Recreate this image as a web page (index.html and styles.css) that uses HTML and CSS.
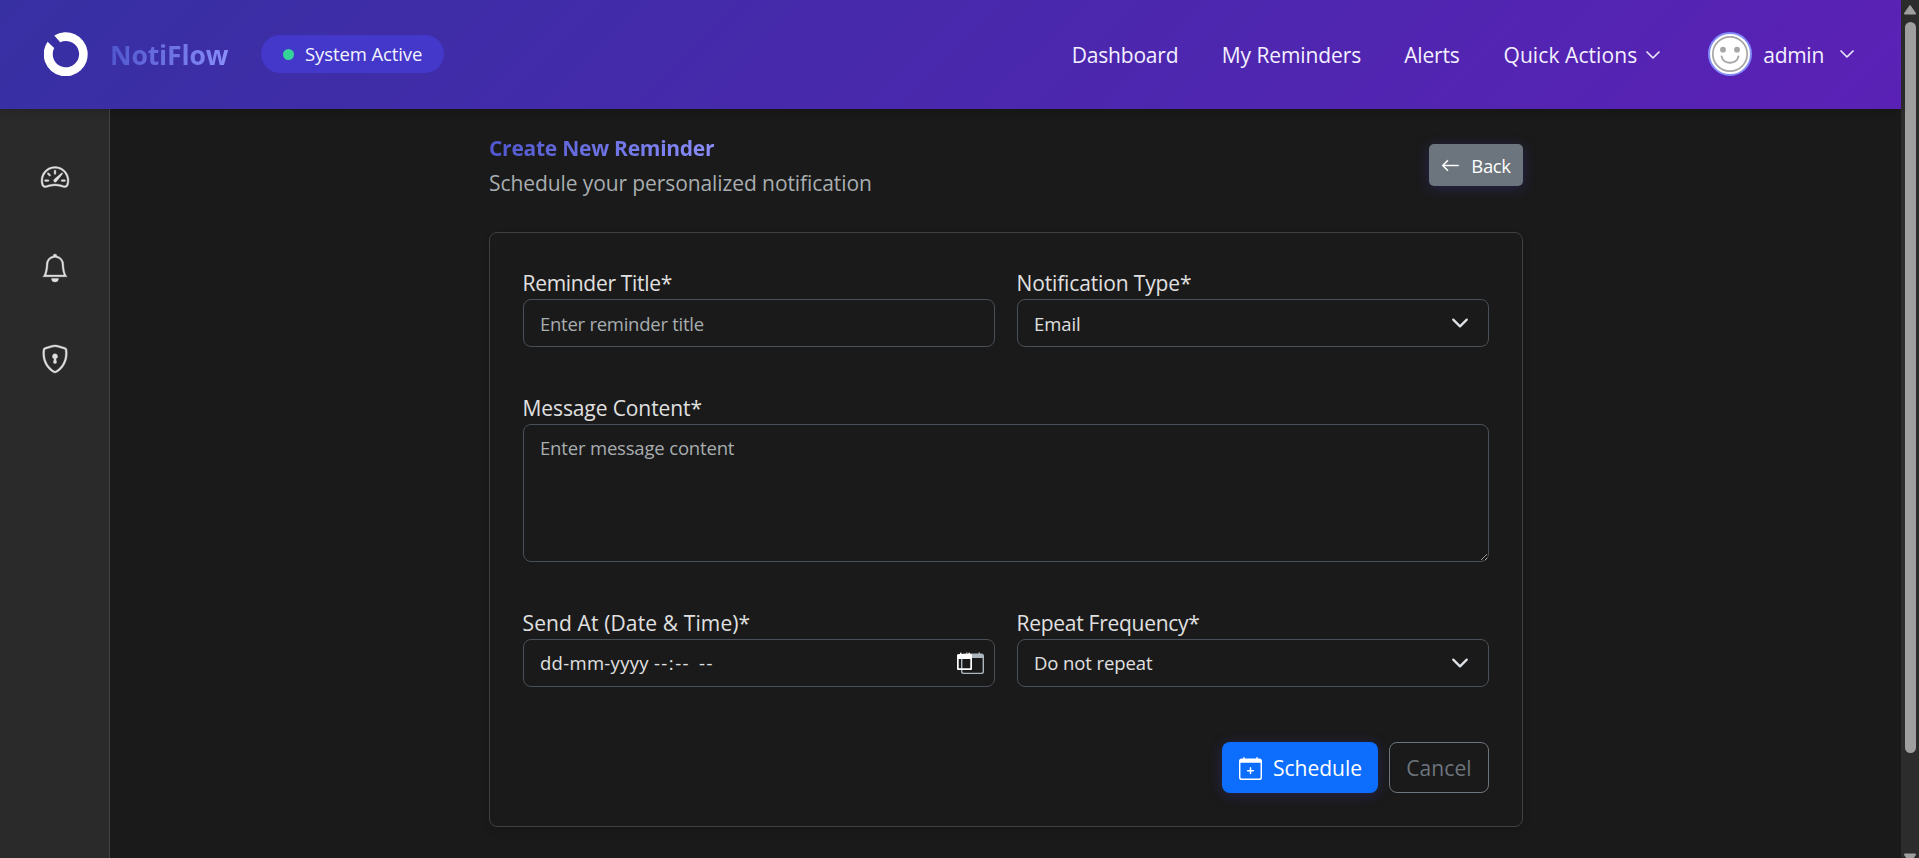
FILE: index.html
```
<!DOCTYPE html>
<html lang="en">
<head>
<meta charset="utf-8">
<title>NotiFlow - Create New Reminder</title>
<link rel="stylesheet" href="styles.css">
</head>
<body>
<div class="app">
  <div class="page">
    <header class="topbar">
      <div class="brand">
        <svg class="logo" viewBox="0 0 44 44"><path fill="#fff" d="M10.3 3.5A22 22 0 1 1 3.6 9.8L10.2 16A13.2 13.2 0 1 0 16.2 10.2Z"/></svg>
        <span class="brand-name gradient-text">NotiFlow</span>
        <span class="status"><i class="status-dot"></i><span class="status-text">System Active</span></span>
      </div>
      <nav class="nav">
        <a class="ls-dash">Dashboard</a>
        <a class="ls-rem">My Reminders</a>
        <a class="ls-alerts">Alerts</a>
        <a class="with-caret">Quick Actions
          <svg class="caret" viewBox="0 0 16 16" fill="currentColor"><path d="M1.646 4.646a.5.5 0 0 1 .708 0L8 10.293l5.646-5.647a.5.5 0 0 1 .708.708l-6 6a.5.5 0 0 1-.708 0l-6-6a.5.5 0 0 1 0-.708"/></svg>
        </a>
        <a class="user">
          <svg class="avatar" viewBox="0 0 44 44">
            <circle cx="22" cy="22" r="21" fill="#fff" stroke="#818cf8" stroke-width="2"/>
            <circle cx="22" cy="22" r="17.2" fill="none" stroke="#a6a6a6" stroke-width="1.7"/>
            <circle cx="15" cy="17.7" r="2.9" fill="#a6a6a6"/><circle cx="29" cy="17.7" r="2.9" fill="#a6a6a6"/>
            <path d="M13.5 24.3c1.8 8.6 15.2 8.6 17 0" fill="none" stroke="#a6a6a6" stroke-width="1.8" stroke-linecap="round"/>
          </svg>
          <span class="user-name">admin</span>
          <svg class="caret" viewBox="0 0 16 16" fill="currentColor"><path d="M1.646 4.646a.5.5 0 0 1 .708 0L8 10.293l5.646-5.647a.5.5 0 0 1 .708.708l-6 6a.5.5 0 0 1-.708 0l-6-6a.5.5 0 0 1 0-.708"/></svg>
        </a>
      </nav>
    </header>
    <div class="body">
      <aside class="sidebar">
        <a><svg viewBox="0 0 16 16" fill="currentColor"><path d="M8 4a.5.5 0 0 1 .5.5V6a.5.5 0 0 1-1 0V4.500A.5.5 0 0 1 8 4M3.732 5.732a.5.5 0 0 1 .707 0l.915.914a.5.5 0 1 1-.708.708l-.914-.915a.5.5 0 0 1 0-.707M2 10a.5.5 0 0 1 .5-.5h1.586a.5.5 0 0 1 0 1H2.500A.5.5 0 0 1 2 10m9.500 0a.5.5 0 0 1 .5-.5h1.500a.5.5 0 0 1 0 1H12a.5.5 0 0 1-.5-.5m.754-4.246a.39.39 0 0 0-.527-.02L7.547 9.310a.91.91 0 1 0 1.302 1.258l3.434-4.297a.39.39 0 0 0-.029-.518z"/><path fill-rule="evenodd" d="M0 10a8 8 0 1 1 15.547 2.661c-.442 1.253-1.845 1.602-2.932 1.250C11.309 13.488 9.475 13 8 13c-1.474 0-3.310.488-4.615.911-1.087.352-2.490.003-2.932-1.250A8 8 0 0 1 0 10m8-7a7 7 0 0 0-6.603 9.329c.203.575.923.876 1.680.630C4.397 12.533 6.358 12 8 12s3.604.532 4.923.960c.757.245 1.477-.056 1.680-.631A7 7 0 0 0 8 3"/></svg></a>
        <a><svg viewBox="0 0 16 16" fill="currentColor"><path d="M8 16a2 2 0 0 0 2-2H6a2 2 0 0 0 2 2M8 1.918l-.797.161A4 4 0 0 0 4 6c0 .628-.134 2.197-.459 3.742-.16.767-.376 1.566-.663 2.258h10.244c-.287-.692-.502-1.490-.663-2.258C12.134 8.197 12 6.628 12 6a4 4 0 0 0-3.203-3.920zM14.220 12c.223.447.481.801.780 1H1c.299-.199.557-.553.780-1C2.680 10.200 3 6.880 3 6c0-2.420 1.720-4.440 4.005-4.901a1 1 0 1 1 1.990 0A5 5 0 0 1 13 6c0 .880.320 4.200 1.220 6"/></svg></a>
        <a><svg viewBox="0 0 16 16" fill="currentColor"><path d="M5.338 1.590a61 61 0 0 0-2.837.856.48.48 0 0 0-.328.390c-.554 4.157.726 7.190 2.253 9.188a10.700 10.700 0 0 0 2.287 2.233c.346.244.652.420.893.533q.180.085.293.118a1 1 0 0 0 .101.025 1 1 0 0 0 .100-.025q.114-.034.294-.118c.240-.113.547-.290.893-.533a10.700 10.700 0 0 0 2.287-2.233c1.527-1.997 2.807-5.031 2.253-9.188a.48.48 0 0 0-.328-.390c-.651-.213-1.750-.560-2.837-.855C9.552 1.290 8.531 1.067 8 1.067c-.530 0-1.552.223-2.662.524zM5.072.560C6.157.265 7.310 0 8 0s1.843.265 2.928.560c1.110.300 2.229.655 2.887.870a1.540 1.540 0 0 1 1.044 1.262c.596 4.477-.787 7.795-2.465 9.990a11.800 11.800 0 0 1-2.517 2.453 7 7 0 0 1-1.048.625c-.280.132-.581.240-.829.240s-.548-.108-.829-.240a7 7 0 0 1-1.048-.625 11.800 11.800 0 0 1-2.517-2.453C1.928 10.487.545 7.169 1.141 2.692A1.540 1.540 0 0 1 2.185 1.430 63 63 0 0 1 5.072.560"/><path d="M9.500 6.500a1.500 1.500 0 0 1-1 1.415l.385 1.990a.5.5 0 0 1-.491.595h-.788a.5.5 0 0 1-.490-.595l.384-1.990a1.500 1.500 0 1 1 2-1.415"/></svg></a>
      </aside>
      <main class="content">
        <div class="page-head">
          <div>
            <h1 class="gradient-text">Create New Reminder</h1>
            <p>Schedule your personalized notification</p>
          </div>
          <button class="btn btn-back"><svg viewBox="0 0 16 16" fill="currentColor"><path fill-rule="evenodd" d="M15 8a.5.5 0 0 0-.5-.5H2.707l3.147-3.146a.5.5 0 1 0-.708-.708l-4 4a.5.5 0 0 0 0 .708l4 4a.5.5 0 0 0 .708-.708L2.707 8.500H14.500A.5.5 0 0 0 15 8"/></svg><span>Back</span></button>
        </div>
        <form class="card">
          <div class="row">
            <div class="field"><label class="ls-title">Reminder Title*</label><input class="control ls-ph-title" type="text" placeholder="Enter reminder title"></div>
            <div class="field"><label class="ls-type">Notification Type*</label>
              <div class="control select email"><span>Email</span><svg viewBox="0 0 16 16" fill="none" stroke="#dee2e6" stroke-width="2" stroke-linecap="round" stroke-linejoin="round"><path d="m2 5 6 6 6-6"/></svg></div></div>
          </div>
          <div class="field"><label>Message Content*</label><textarea class="control area" placeholder="Enter message content"></textarea></div>
          <div class="row">
            <div class="field"><label class="ls-send">Send At (Date &amp; Time)*</label>
              <div class="control date"><span class="date-text"><span class="day">dd-mm-yyyy</span><span class="time">--:--</span><span class="meridiem">--</span></span>
                <svg class="date-icon" viewBox="0 0 28 24">
                  <path d="M6.500 1.500H9V.5h1.500v1h11V.5H23v1h1.500A2.500 2.500 0 0 1 27 4v15.500a2.500 2.500 0 0 1-2.500 2.500h-18A2.500 2.500 0 0 1 4 19.500V4a2.500 2.500 0 0 1 2.500-2.500ZM5.400 6v13.500c0 .7.5 1.200 1.200 1.200h17.800c.7 0 1.200-.5 1.200-1.200V6Z" fill="#adb5bd" fill-rule="evenodd"/>
                  <path d="M1.500 2H3V.8h1.500V2h7V.8H13V2h1.200l.8.800V17.200l-.8.800H.8l-.8-.8V2.800ZM1.700 7v9.300h11.600V7Z" fill="#fff" fill-rule="evenodd"/>
                </svg></div></div>
            <div class="field"><label class="ls-freq">Repeat Frequency*</label>
              <div class="control select"><span>Do not repeat</span><svg viewBox="0 0 16 16" fill="none" stroke="#dee2e6" stroke-width="2" stroke-linecap="round" stroke-linejoin="round"><path d="m2 5 6 6 6-6"/></svg></div></div>
          </div>
          <div class="actions">
            <button type="button" class="btn btn-primary"><svg viewBox="0 0 16 16" fill="currentColor"><path d="M8 7a.5.5 0 0 1 .5.5V9H10a.5.5 0 0 1 0 1H8.500v1.500a.5.5 0 0 1-1 0V10H6a.5.5 0 0 1 0-1h1.500V7.500A.5.5 0 0 1 8 7"/><path d="M3.500 0a.5.5 0 0 1 .5.5V1h8V.5a.5.5 0 0 1 1 0V1h1a2 2 0 0 1 2 2v11a2 2 0 0 1-2 2H2a2 2 0 0 1-2-2V3a2 2 0 0 1 2-2h1V.5a.5.5 0 0 1 .5-.5M1 4v10a1 1 0 0 0 1 1h12a1 1 0 0 0 1-1V4z"/></svg><span>Schedule</span></button>
            <button type="button" class="btn btn-outline">Cancel</button>
          </div>
        </form>
      </main>
    </div>
  </div>
  <div class="scrollbar">
    <svg class="arrow" viewBox="0 0 12 10"><path d="M6 1.200 11 8.500H1Z" fill="#9f9f9f" stroke="#9f9f9f" stroke-width="2" stroke-linejoin="round"/></svg>
    <div class="thumb"></div>
    <svg class="arrow" viewBox="0 0 12 10"><path d="M6 8.800 11 1.500H1Z" fill="#9f9f9f" stroke="#9f9f9f" stroke-width="2" stroke-linejoin="round"/></svg>
  </div>
</div>
</body>
</html>
```
FILE: styles.css
```
* { box-sizing: border-box; }

body {
  margin: 0;
  background: #1a1a1a;
  color: #e0e0e0;
  font-family: "Open Sans", "Noto Sans", sans-serif;
  font-size: 21px;
  line-height: 33px;
}

.app { display: flex; height: 858px; overflow: hidden; }
.page { flex: 1; display: flex; flex-direction: column; min-width: 0; }

.gradient-text {
  background: linear-gradient(100deg, #4f55cc, #8b8ffb);
  -webkit-background-clip: text;
  background-clip: text;
  color: transparent;
}

/* Top bar */
.topbar {
  position: relative;
  flex: none;
  height: 109px;
  display: flex;
  align-items: center;
  justify-content: space-between;
  padding: 0 46px 0 44px;
  background: linear-gradient(135deg, #3730a3 0%, #5b21b6 100%);
  box-shadow: 0 4px 8px rgba(0, 0, 0, .15);
}
.brand { display: flex; align-items: center; padding-bottom: 1px; }
.logo { width: 44px; height: 44px; margin-right: 22px; }
.brand-name { font-size: 26.5px; font-weight: 700; letter-spacing: -.12px; padding-top: 2px; width: 119px; }
.status {
  display: flex; align-items: center;
  width: 183px; height: 38px;
  margin-left: 32px; padding-left: 22px;
  border-radius: 19px;
  background: #4338ca;
  color: #f3f4ff;
  font-size: 18.5px; letter-spacing: -.1px;
}
.status-dot { width: 11px; height: 11px; margin-right: 11px; border-radius: 50%; background: #34d399; }
.status-text { padding-bottom: 1px; }

.nav { display: flex; align-items: center; color: #f3f0ff; padding-bottom: 1px; }
.nav a { display: flex; align-items: center; white-space: nowrap; padding-top: 2px; }
.ls-dash { letter-spacing: -.2px; margin-right: 43.5px; }
.ls-rem { letter-spacing: -.087px; margin-right: 43px; }
.ls-alerts { letter-spacing: -.2px; margin-right: 44px; }
.nav .with-caret { letter-spacing: .08px; gap: 8px; margin-right: 47px; }
.nav .user { padding-top: 0; }
.caret { width: 16px; height: 16px; stroke: currentColor; stroke-width: .7px; }
.avatar { width: 44px; height: 44px; margin-right: 11px; }
.user-name { letter-spacing: -.28px; margin-right: 15px; padding-top: 2px; }

/* Layout */
.body { flex: 1; display: flex; min-height: 0; }
.sidebar {
  flex: none; width: 110px;
  display: flex; flex-direction: column; align-items: center;
  gap: 63px; padding-top: 54px;
  background: #2a2a2a;
  border-right: 1px solid #444;
}
.sidebar a { height: 28px; display: flex; }
.sidebar svg { width: 28px; height: 28px; stroke: currentColor; stroke-width: .2px; overflow: visible; }
.content { flex: 1; padding: 23px 378px 0 379px; }

.page-head { display: flex; justify-content: space-between; height: 100px; }
h1 { margin: 0; font-size: 21px; line-height: 33px; font-weight: 700; letter-spacing: -.26px; width: 227px; white-space: nowrap; }
.page-head p { margin: 2px 0 0; color: #a8adb0; letter-spacing: -.09px; }

.btn {
  display: flex; align-items: center; justify-content: center;
  border: 0; padding: 0; color: #fff;
  font-family: inherit; font-size: 21px; line-height: 33px;
}
.btn-back {
  width: 94px; height: 42px; margin-top: 12px; gap: 11px;
  border-radius: 5px; background: #6c757d;
  font-size: 18.5px; letter-spacing: -.36px;
  box-shadow: 0 2px 14px rgba(79, 70, 229, .25);
}
.btn-back svg { width: 19px; height: 19px; stroke: currentColor; stroke-width: .3px; }

/* Form */
.card {
  width: 1034px; height: 595px;
  padding: 33px;
  border: 1px solid #404040;
  border-radius: 8px;
  display: flex; flex-direction: column; gap: 44px;
  box-shadow: 0 4px 8px rgba(0, 0, 0, .12);
}
.row { display: grid; grid-template-columns: 1fr 1fr; gap: 22px; }
.field { display: flex; flex-direction: column; }
label { height: 33px; padding-top: 1px; margin-left: -.5px; letter-spacing: -.1px; white-space: nowrap; }
.ls-title { letter-spacing: -.3px; }
.ls-type { letter-spacing: -.14px; }
.ls-send { letter-spacing: .12px; }
.ls-freq { letter-spacing: -.27px; }

.control {
  width: 100%; height: 48px;
  padding: 0 16px;
  border: 1px solid #495057;
  border-radius: 8px;
  background: #1a1a1a; color: #e0e0e0;
  font-family: inherit; font-size: 18.5px; line-height: 28px;
  letter-spacing: -.175px;
  color-scheme: dark;
  outline: 0;
}
.control::placeholder { color: #a8adb0; opacity: 1; }
.ls-ph-title { letter-spacing: -.26px; }
.area { display: block; height: 138px; padding: 9px 16px; resize: both; }
.select, .date { display: flex; align-items: center; justify-content: space-between; }
.select { letter-spacing: -.1px; padding-right: 19px; }
.email span { padding-top: 1px; }
.select svg { width: 18px; height: 18px; }
.date { padding-right: 9px; }
.date-text { display: flex; }
.day { letter-spacing: .3px; margin-right: 5px; }
.time { letter-spacing: 1.5px; margin-right: 9px; }
.meridiem { letter-spacing: 1.6px; }
.date-icon { width: 28px; height: 24px; margin-top: 1px; }

.actions { display: flex; justify-content: flex-end; gap: 11px; margin-top: 11px; }
.btn-primary {
  width: 156px; height: 51px; gap: 11px; padding: 1px 0 0 1px;
  border-radius: 8px; background: #0d6efd;
  letter-spacing: 0;
  box-shadow: 0 2px 14px rgba(79, 70, 229, .25);
}
.btn-primary svg { width: 23px; height: 23px; }
.btn-outline {
  width: 100px; height: 51px; padding-top: 2px;
  border: 1px solid #6c757d; border-radius: 8px;
  background: transparent; color: #6c757d;
  letter-spacing: .075px;
}

/* Scroll track */
.scrollbar {
  flex: none; width: 18px;
  display: flex; flex-direction: column; align-items: center;
  background: #2c2c2c;
  padding-top: 5px;
}
.arrow { flex: none; width: 12px; height: 10px; }
.thumb { flex: none; width: 11px; height: 731px; margin: 7px 0 100px; border-radius: 6px; background: #9f9f9f; }
```
